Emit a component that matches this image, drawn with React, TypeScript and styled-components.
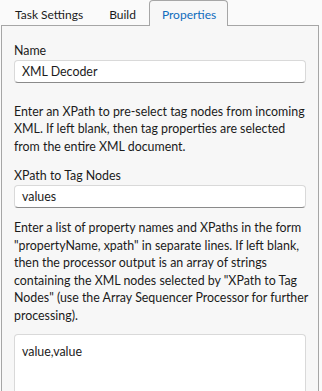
import React from 'react';
import styled, { createGlobalStyle } from 'styled-components';

const GlobalStyle = createGlobalStyle`
  body {
    margin: 0;
    background: #fafafa;
    font-family: Lato, 'Noto Sans', sans-serif;
    font-size: 12.4px;
    color: #1b1b1b;
  }
`;

const Page = styled.div`
  width: 322px;
  height: 391px;
  overflow: hidden;
  padding-left: 1px;
  box-sizing: border-box;
`;

const TabStrip = styled.div`
  display: flex;
  align-items: flex-end;
  height: 26px;
  padding-left: 1px;
  position: relative;
  z-index: 1;
`;

const Tab = styled.div<{ $active?: boolean }>`
  padding: 1px ${(p) => (p.$active ? 11 : 12)}px 0 12px;
  box-sizing: border-box;
  display: flex;
  align-items: center;
  font-size: 12px;
  color: ${(p) => (p.$active ? '#0f6cbd' : '#1b1b1b')};
  background: ${(p) => (p.$active ? '#f7f7f7' : 'transparent')};
  border: 1px solid ${(p) => (p.$active ? '#a6a6a6' : 'transparent')};
  border-bottom: none;
  border-radius: 4px 4px 0 0;
  height: ${(p) => (p.$active ? 26 : 25)}px;
`;

const Panel = styled.div`
  width: 318px;
  height: 380px;
  margin-top: -1px;
  box-sizing: border-box;
  background: #f7f7f7;
  border: 1px solid #a6a6a6;
  padding: 16px 12px 0 12px;
  display: flex;
  flex-direction: column;
`;

const Label = styled.div`
  line-height: 17.6px;
`;

const Input = styled.div`
  height: 23px;
  flex-shrink: 0;
  box-sizing: border-box;
  background: #ffffff;
  border: 1px solid #d9d9d9;
  border-bottom-color: #8a8a8a;
  border-radius: 4px;
  padding: 0 7px;
  display: flex;
  align-items: center;
`;

const Help = styled.p<{ $before: number; $after: number }>`
  margin: ${(p) => p.$before}px -4px ${(p) => p.$after}px 0;
  line-height: 17.6px;
`;

const TextArea = styled.div`
  flex: 1;
  background: #ffffff;
  border: 1px solid #d9d9d9;
  border-bottom: none;
  border-radius: 4px 4px 0 0;
  padding: 8px 7px;
  line-height: 17px;
`;

export default function App() {
  return (
    <Page>
      <GlobalStyle />
      <TabStrip>
        <Tab>Task Settings</Tab>
        <Tab>Build</Tab>
        <Tab $active>Properties</Tab>
      </TabStrip>
      <Panel>
        <Label>Name</Label>
        <Input>XML Decoder</Input>
        <Help $before={20} $after={12}>
          Enter an XPath to pre-select tag nodes from incoming XML. If left blank, then tag
          properties are selected from the entire XML document.
        </Help>
        <Label>XPath to Tag Nodes</Label>
        <Input>values</Input>
        <Help $before={11} $after={9}>
          Enter a list of property names and XPaths in the form "propertyName, xpath" in
          separate lines. If left blank, then the processor output is an array of strings
          containing the XML nodes selected by "XPath to Tag Nodes" (use the Array Sequencer
          Processor for further processing).
        </Help>
        <TextArea>value,value</TextArea>
      </Panel>
    </Page>
  );
}
